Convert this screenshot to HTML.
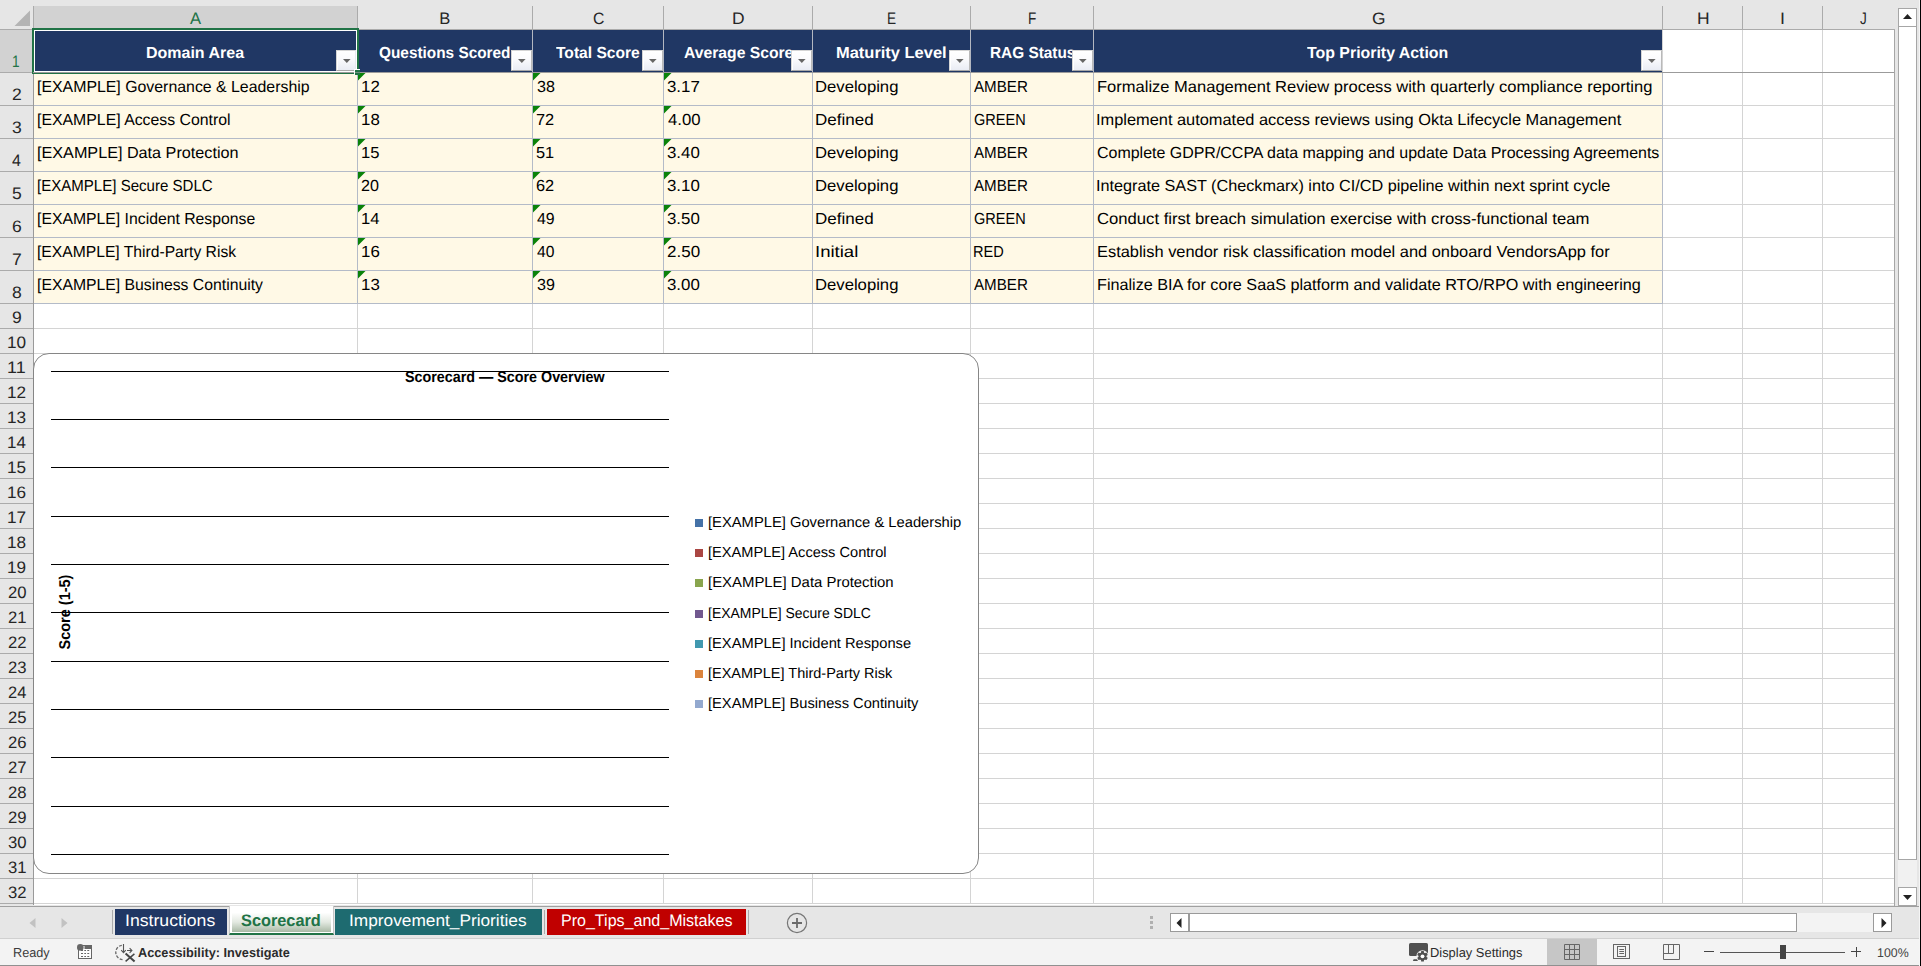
<!DOCTYPE html><html lang="en"><head><meta charset="utf-8"><title>Scorecard</title>
<style>
html,body{margin:0;padding:0}
body{width:1921px;height:966px;position:relative;overflow:hidden;background:#e6e6e6;font-family:"Liberation Sans", sans-serif;text-rendering:geometricPrecision}
div,span,svg{position:absolute;box-sizing:border-box}
.t{white-space:nowrap;line-height:40px;height:40px;transform-origin:0 0}
.hl{height:1px;left:0}
.vl{width:1px;top:0}

</style></head><body>
<div id="sheet" style="left:0;top:0;width:1921px;height:906px">
<div style="left:34px;top:30px;width:1860px;height:875px;background:#fff;"></div>
<div style="left:34px;top:72px;width:1860px;height:1px;background:#d4d4d4;"></div>
<div style="left:34px;top:105px;width:1860px;height:1px;background:#d4d4d4;"></div>
<div style="left:34px;top:138px;width:1860px;height:1px;background:#d4d4d4;"></div>
<div style="left:34px;top:171px;width:1860px;height:1px;background:#d4d4d4;"></div>
<div style="left:34px;top:204px;width:1860px;height:1px;background:#d4d4d4;"></div>
<div style="left:34px;top:237px;width:1860px;height:1px;background:#d4d4d4;"></div>
<div style="left:34px;top:270px;width:1860px;height:1px;background:#d4d4d4;"></div>
<div style="left:34px;top:303px;width:1860px;height:1px;background:#d4d4d4;"></div>
<div style="left:34px;top:328px;width:1860px;height:1px;background:#d4d4d4;"></div>
<div style="left:34px;top:353px;width:1860px;height:1px;background:#d4d4d4;"></div>
<div style="left:34px;top:378px;width:1860px;height:1px;background:#d4d4d4;"></div>
<div style="left:34px;top:403px;width:1860px;height:1px;background:#d4d4d4;"></div>
<div style="left:34px;top:428px;width:1860px;height:1px;background:#d4d4d4;"></div>
<div style="left:34px;top:453px;width:1860px;height:1px;background:#d4d4d4;"></div>
<div style="left:34px;top:478px;width:1860px;height:1px;background:#d4d4d4;"></div>
<div style="left:34px;top:503px;width:1860px;height:1px;background:#d4d4d4;"></div>
<div style="left:34px;top:528px;width:1860px;height:1px;background:#d4d4d4;"></div>
<div style="left:34px;top:553px;width:1860px;height:1px;background:#d4d4d4;"></div>
<div style="left:34px;top:578px;width:1860px;height:1px;background:#d4d4d4;"></div>
<div style="left:34px;top:603px;width:1860px;height:1px;background:#d4d4d4;"></div>
<div style="left:34px;top:628px;width:1860px;height:1px;background:#d4d4d4;"></div>
<div style="left:34px;top:653px;width:1860px;height:1px;background:#d4d4d4;"></div>
<div style="left:34px;top:678px;width:1860px;height:1px;background:#d4d4d4;"></div>
<div style="left:34px;top:703px;width:1860px;height:1px;background:#d4d4d4;"></div>
<div style="left:34px;top:728px;width:1860px;height:1px;background:#d4d4d4;"></div>
<div style="left:34px;top:753px;width:1860px;height:1px;background:#d4d4d4;"></div>
<div style="left:34px;top:778px;width:1860px;height:1px;background:#d4d4d4;"></div>
<div style="left:34px;top:803px;width:1860px;height:1px;background:#d4d4d4;"></div>
<div style="left:34px;top:828px;width:1860px;height:1px;background:#d4d4d4;"></div>
<div style="left:34px;top:853px;width:1860px;height:1px;background:#d4d4d4;"></div>
<div style="left:34px;top:878px;width:1860px;height:1px;background:#d4d4d4;"></div>
<div style="left:34px;top:903px;width:1860px;height:1px;background:#d4d4d4;"></div>
<div style="left:357px;top:30px;width:1px;height:874px;background:#d4d4d4;"></div>
<div style="left:532px;top:30px;width:1px;height:874px;background:#d4d4d4;"></div>
<div style="left:663px;top:30px;width:1px;height:874px;background:#d4d4d4;"></div>
<div style="left:812px;top:30px;width:1px;height:874px;background:#d4d4d4;"></div>
<div style="left:970px;top:30px;width:1px;height:874px;background:#d4d4d4;"></div>
<div style="left:1093px;top:30px;width:1px;height:874px;background:#d4d4d4;"></div>
<div style="left:1662px;top:30px;width:1px;height:874px;background:#d4d4d4;"></div>
<div style="left:1742px;top:30px;width:1px;height:874px;background:#d4d4d4;"></div>
<div style="left:1822px;top:30px;width:1px;height:874px;background:#d4d4d4;"></div>
<div style="left:0px;top:72px;width:1895px;height:1px;background:#9b9b9b;"></div>
<div style="left:1894px;top:29px;width:1px;height:877px;background:#a6a6a6;"></div>
<div id="colhead" style="left:0;top:6px;width:1895px;height:24px">
<div style="left:34px;top:0px;width:323px;height:23px;background:#d2d2d2;"></div>
<div style="left:33px;top:0px;width:1px;height:23px;background:#ababab;"></div>
<div style="left:357px;top:0px;width:1px;height:23px;background:#ababab;"></div>
<div style="left:532px;top:0px;width:1px;height:23px;background:#ababab;"></div>
<div style="left:663px;top:0px;width:1px;height:23px;background:#ababab;"></div>
<div style="left:812px;top:0px;width:1px;height:23px;background:#ababab;"></div>
<div style="left:970px;top:0px;width:1px;height:23px;background:#ababab;"></div>
<div style="left:1093px;top:0px;width:1px;height:23px;background:#ababab;"></div>
<div style="left:1662px;top:0px;width:1px;height:23px;background:#ababab;"></div>
<div style="left:1742px;top:0px;width:1px;height:23px;background:#ababab;"></div>
<div style="left:1822px;top:0px;width:1px;height:23px;background:#ababab;"></div>
</div>
<div style="left:0px;top:29px;width:1895px;height:1px;background:#ababab;"></div>
<svg style="left:14px;top:10px" width="17" height="17" viewBox="0 0 17 17"><path d="M16 0.5V16H0.5Z" fill="#b4b4b4"/></svg>
<span id="t1" class="t" style="left:190.00px;top:-1px;font-size:16.6px;color:#217346;">A</span>
<span id="t2" class="t" style="left:439.25px;top:-1px;font-size:16.6px;color:#262626;">B</span>
<span id="t3" class="t" style="left:592.79px;top:-1px;font-size:16.6px;color:#262626;transform:scaleX(0.9524);">C</span>
<span id="t4" class="t" style="left:731.69px;top:-1px;font-size:16.6px;color:#262626;transform:scaleX(1.0500);">D</span>
<span id="t5" class="t" style="left:886.93px;top:-1px;font-size:16.6px;color:#262626;transform:scaleX(0.8200);">E</span>
<span id="t6" class="t" style="left:1027.84px;top:-1px;font-size:16.6px;color:#262626;transform:scaleX(0.8200);">F</span>
<span id="t7" class="t" style="left:1371.72px;top:-1px;font-size:16.6px;color:#262626;transform:scaleX(1.0455);">G</span>
<span id="t8" class="t" style="left:1696.68px;top:-1px;font-size:16.6px;color:#262626;transform:scaleX(1.0526);">H</span>
<span id="t9" class="t" style="left:1780.07px;top:-1px;font-size:16.6px;color:#262626;transform:scaleX(1.0800);">I</span>
<span id="t10" class="t" style="left:1859.78px;top:-1px;font-size:16.6px;color:#262626;transform:scaleX(0.8200);">J</span>
<div id="rowhead" style="left:0;top:30px;width:34px;height:875px">
<div style="left:0px;top:0px;width:33px;height:42px;background:#d2d2d2;"></div>
<div style="left:0px;top:42px;width:33px;height:1px;background:#ababab;"></div>
<div style="left:0px;top:75px;width:33px;height:1px;background:#ababab;"></div>
<div style="left:0px;top:108px;width:33px;height:1px;background:#ababab;"></div>
<div style="left:0px;top:141px;width:33px;height:1px;background:#ababab;"></div>
<div style="left:0px;top:174px;width:33px;height:1px;background:#ababab;"></div>
<div style="left:0px;top:207px;width:33px;height:1px;background:#ababab;"></div>
<div style="left:0px;top:240px;width:33px;height:1px;background:#ababab;"></div>
<div style="left:0px;top:273px;width:33px;height:1px;background:#ababab;"></div>
<div style="left:0px;top:298px;width:33px;height:1px;background:#ababab;"></div>
<div style="left:0px;top:323px;width:33px;height:1px;background:#ababab;"></div>
<div style="left:0px;top:348px;width:33px;height:1px;background:#ababab;"></div>
<div style="left:0px;top:373px;width:33px;height:1px;background:#ababab;"></div>
<div style="left:0px;top:398px;width:33px;height:1px;background:#ababab;"></div>
<div style="left:0px;top:423px;width:33px;height:1px;background:#ababab;"></div>
<div style="left:0px;top:448px;width:33px;height:1px;background:#ababab;"></div>
<div style="left:0px;top:473px;width:33px;height:1px;background:#ababab;"></div>
<div style="left:0px;top:498px;width:33px;height:1px;background:#ababab;"></div>
<div style="left:0px;top:523px;width:33px;height:1px;background:#ababab;"></div>
<div style="left:0px;top:548px;width:33px;height:1px;background:#ababab;"></div>
<div style="left:0px;top:573px;width:33px;height:1px;background:#ababab;"></div>
<div style="left:0px;top:598px;width:33px;height:1px;background:#ababab;"></div>
<div style="left:0px;top:623px;width:33px;height:1px;background:#ababab;"></div>
<div style="left:0px;top:648px;width:33px;height:1px;background:#ababab;"></div>
<div style="left:0px;top:673px;width:33px;height:1px;background:#ababab;"></div>
<div style="left:0px;top:698px;width:33px;height:1px;background:#ababab;"></div>
<div style="left:0px;top:723px;width:33px;height:1px;background:#ababab;"></div>
<div style="left:0px;top:748px;width:33px;height:1px;background:#ababab;"></div>
<div style="left:0px;top:773px;width:33px;height:1px;background:#ababab;"></div>
<div style="left:0px;top:798px;width:33px;height:1px;background:#ababab;"></div>
<div style="left:0px;top:823px;width:33px;height:1px;background:#ababab;"></div>
<div style="left:0px;top:848px;width:33px;height:1px;background:#ababab;"></div>
<div style="left:0px;top:873px;width:33px;height:1px;background:#ababab;"></div>
<div style="left:33px;top:0px;width:1px;height:875px;background:#9a9a9a;"></div>
</div>
<span id="t11" class="t" style="left:12.10px;top:42px;font-size:16.6px;color:#217346;transform:scaleX(0.8200);">1</span>
<span id="t12" class="t" style="left:11.51px;top:75px;font-size:16.6px;color:#262626;transform:scaleX(1.0581);">2</span>
<span id="t13" class="t" style="left:11.51px;top:108px;font-size:16.6px;color:#262626;transform:scaleX(1.0581);">3</span>
<span id="t14" class="t" style="left:12.06px;top:141px;font-size:16.6px;color:#262626;transform:scaleX(0.9647);">4</span>
<span id="t15" class="t" style="left:11.51px;top:174px;font-size:16.6px;color:#262626;transform:scaleX(1.0581);">5</span>
<span id="t16" class="t" style="left:11.51px;top:207px;font-size:16.6px;color:#262626;transform:scaleX(1.0581);">6</span>
<span id="t17" class="t" style="left:11.51px;top:240px;font-size:16.6px;color:#262626;transform:scaleX(1.0581);">7</span>
<span id="t18" class="t" style="left:11.51px;top:273px;font-size:16.6px;color:#262626;transform:scaleX(1.0581);">8</span>
<span id="t19" class="t" style="left:11.51px;top:298px;font-size:16.6px;color:#262626;transform:scaleX(1.0581);">9</span>
<span id="t20" class="t" style="left:7.20px;top:323px;font-size:16.6px;color:#262626;transform:scaleX(1.0364);">10</span>
<span id="t21" class="t" style="left:7.46px;top:348px;font-size:16.6px;color:#262626;transform:scaleX(1.0800);">11</span>
<span id="t22" class="t" style="left:7.20px;top:373px;font-size:16.6px;color:#262626;transform:scaleX(1.0364);">12</span>
<span id="t23" class="t" style="left:7.20px;top:398px;font-size:16.6px;color:#262626;transform:scaleX(1.0364);">13</span>
<span id="t24" class="t" style="left:7.22px;top:423px;font-size:16.6px;color:#262626;transform:scaleX(1.0209);">14</span>
<span id="t25" class="t" style="left:7.20px;top:448px;font-size:16.6px;color:#262626;transform:scaleX(1.0364);">15</span>
<span id="t26" class="t" style="left:7.20px;top:473px;font-size:16.6px;color:#262626;transform:scaleX(1.0364);">16</span>
<span id="t27" class="t" style="left:7.20px;top:498px;font-size:16.6px;color:#262626;transform:scaleX(1.0364);">17</span>
<span id="t28" class="t" style="left:7.20px;top:523px;font-size:16.6px;color:#262626;transform:scaleX(1.0364);">18</span>
<span id="t29" class="t" style="left:7.20px;top:548px;font-size:16.6px;color:#262626;transform:scaleX(1.0364);">19</span>
<span id="t30" class="t" style="left:7.75px;top:573px;font-size:16.6px;color:#262626;transform:scaleX(1.0059);">20</span>
<span id="t31" class="t" style="left:7.75px;top:598px;font-size:16.6px;color:#262626;transform:scaleX(1.0059);">21</span>
<span id="t32" class="t" style="left:7.75px;top:623px;font-size:16.6px;color:#262626;transform:scaleX(1.0059);">22</span>
<span id="t33" class="t" style="left:7.75px;top:648px;font-size:16.6px;color:#262626;transform:scaleX(1.0059);">23</span>
<span id="t34" class="t" style="left:7.76px;top:673px;font-size:16.6px;color:#262626;transform:scaleX(0.9913);">24</span>
<span id="t35" class="t" style="left:7.75px;top:698px;font-size:16.6px;color:#262626;transform:scaleX(1.0059);">25</span>
<span id="t36" class="t" style="left:7.75px;top:723px;font-size:16.6px;color:#262626;transform:scaleX(1.0059);">26</span>
<span id="t37" class="t" style="left:7.75px;top:748px;font-size:16.6px;color:#262626;transform:scaleX(1.0059);">27</span>
<span id="t38" class="t" style="left:7.75px;top:773px;font-size:16.6px;color:#262626;transform:scaleX(1.0059);">28</span>
<span id="t39" class="t" style="left:7.75px;top:798px;font-size:16.6px;color:#262626;transform:scaleX(1.0059);">29</span>
<span id="t40" class="t" style="left:7.75px;top:823px;font-size:16.6px;color:#262626;transform:scaleX(1.0059);">30</span>
<span id="t41" class="t" style="left:7.75px;top:848px;font-size:16.6px;color:#262626;transform:scaleX(1.0059);">31</span>
<span id="t42" class="t" style="left:7.75px;top:873px;font-size:16.6px;color:#262626;transform:scaleX(1.0059);">32</span>
<div style="left:35px;top:31px;width:321px;height:40px;background:#203764;"></div>
<div style="left:359px;top:30px;width:174px;height:42px;background:#203764;"></div>
<div style="left:533px;top:30px;width:130px;height:42px;background:#203764;"></div>
<div style="left:664px;top:30px;width:148px;height:42px;background:#203764;"></div>
<div style="left:813px;top:30px;width:157px;height:42px;background:#203764;"></div>
<div style="left:971px;top:30px;width:122px;height:42px;background:#203764;"></div>
<div style="left:1094px;top:30px;width:568px;height:42px;background:#203764;"></div>
<div style="left:532px;top:30px;width:1px;height:42px;background:#b3b7c1;"></div>
<div style="left:663px;top:30px;width:1px;height:42px;background:#b3b7c1;"></div>
<div style="left:812px;top:30px;width:1px;height:42px;background:#b3b7c1;"></div>
<div style="left:970px;top:30px;width:1px;height:42px;background:#b3b7c1;"></div>
<div style="left:1093px;top:30px;width:1px;height:42px;background:#b3b7c1;"></div>
<span id="t43" class="t" style="left:145.50px;top:34px;font-size:16px;color:#fff;font-weight:700;transform:scaleX(0.9995);">Domain Area</span>
<span id="t44" class="t" style="left:379.02px;top:34px;font-size:16px;color:#fff;font-weight:700;transform:scaleX(0.9601);">Questions Scored</span>
<span id="t45" class="t" style="left:556.16px;top:34px;font-size:16px;color:#fff;font-weight:700;transform:scaleX(0.9748);">Total Score</span>
<span id="t46" class="t" style="left:683.91px;top:34px;font-size:16px;color:#fff;font-weight:700;transform:scaleX(0.9810);">Average Score</span>
<span id="t47" class="t" style="left:836.47px;top:34px;font-size:16px;color:#fff;font-weight:700;transform:scaleX(1.0284);">Maturity Level</span>
<span id="t48" class="t" style="left:989.74px;top:34px;font-size:16px;color:#fff;font-weight:700;transform:scaleX(0.9605);">RAG Status</span>
<span id="t49" class="t" style="left:1307.25px;top:34px;font-size:16px;color:#fff;font-weight:700;transform:scaleX(0.9929);">Top Priority Action</span>
<div class="fb" style="left:336px;top:50px;width:20px;height:21px;background:linear-gradient(#fff,#fbfbfd 40%,#e9ecf4);border:1px solid #e6e8ef;border-top-color:#d5d5d5;border-left-color:#d5d5d5;border-bottom-color:#a9a9a9;box-shadow:inset 1px 1px 0 #fff"></div>
<svg style="left:343px;top:59px" width="8" height="4" viewBox="0 0 8 4"><path d="M0 0H7.6L3.8 4Z" fill="#666"/></svg>
<div class="fb" style="left:511px;top:50px;width:21px;height:21px;background:linear-gradient(#fff,#fbfbfd 40%,#e9ecf4);border:1px solid #b9b9b9;border-top-color:#d5d5d5;border-left-color:#d5d5d5;border-bottom-color:#a9a9a9;box-shadow:inset 1px 1px 0 #fff"></div>
<svg style="left:518px;top:59px" width="8" height="4" viewBox="0 0 8 4"><path d="M0 0H7.6L3.8 4Z" fill="#666"/></svg>
<div class="fb" style="left:642px;top:50px;width:21px;height:21px;background:linear-gradient(#fff,#fbfbfd 40%,#e9ecf4);border:1px solid #b9b9b9;border-top-color:#d5d5d5;border-left-color:#d5d5d5;border-bottom-color:#a9a9a9;box-shadow:inset 1px 1px 0 #fff"></div>
<svg style="left:649px;top:59px" width="8" height="4" viewBox="0 0 8 4"><path d="M0 0H7.6L3.8 4Z" fill="#666"/></svg>
<div class="fb" style="left:791px;top:50px;width:21px;height:21px;background:linear-gradient(#fff,#fbfbfd 40%,#e9ecf4);border:1px solid #b9b9b9;border-top-color:#d5d5d5;border-left-color:#d5d5d5;border-bottom-color:#a9a9a9;box-shadow:inset 1px 1px 0 #fff"></div>
<svg style="left:798px;top:59px" width="8" height="4" viewBox="0 0 8 4"><path d="M0 0H7.6L3.8 4Z" fill="#666"/></svg>
<div class="fb" style="left:949px;top:50px;width:21px;height:21px;background:linear-gradient(#fff,#fbfbfd 40%,#e9ecf4);border:1px solid #b9b9b9;border-top-color:#d5d5d5;border-left-color:#d5d5d5;border-bottom-color:#a9a9a9;box-shadow:inset 1px 1px 0 #fff"></div>
<svg style="left:956px;top:59px" width="8" height="4" viewBox="0 0 8 4"><path d="M0 0H7.6L3.8 4Z" fill="#666"/></svg>
<div class="fb" style="left:1072px;top:50px;width:21px;height:21px;background:linear-gradient(#fff,#fbfbfd 40%,#e9ecf4);border:1px solid #b9b9b9;border-top-color:#d5d5d5;border-left-color:#d5d5d5;border-bottom-color:#a9a9a9;box-shadow:inset 1px 1px 0 #fff"></div>
<svg style="left:1079px;top:59px" width="8" height="4" viewBox="0 0 8 4"><path d="M0 0H7.6L3.8 4Z" fill="#666"/></svg>
<div class="fb" style="left:1641px;top:50px;width:21px;height:21px;background:linear-gradient(#fff,#fbfbfd 40%,#e9ecf4);border:1px solid #b9b9b9;border-top-color:#d5d5d5;border-left-color:#d5d5d5;border-bottom-color:#a9a9a9;box-shadow:inset 1px 1px 0 #fff"></div>
<svg style="left:1648px;top:59px" width="8" height="4" viewBox="0 0 8 4"><path d="M0 0H7.6L3.8 4Z" fill="#666"/></svg>
<div style="left:34px;top:73px;width:1628px;height:230px;background:#fff9e6;"></div>
<div style="left:34px;top:105px;width:1629px;height:1px;background:#b4bbc8;"></div>
<div style="left:34px;top:138px;width:1629px;height:1px;background:#b4bbc8;"></div>
<div style="left:34px;top:171px;width:1629px;height:1px;background:#b4bbc8;"></div>
<div style="left:34px;top:204px;width:1629px;height:1px;background:#b4bbc8;"></div>
<div style="left:34px;top:237px;width:1629px;height:1px;background:#b4bbc8;"></div>
<div style="left:34px;top:270px;width:1629px;height:1px;background:#b4bbc8;"></div>
<div style="left:34px;top:303px;width:1629px;height:1px;background:#b4bbc8;"></div>
<div style="left:357px;top:73px;width:1px;height:231px;background:#b4bbc8;"></div>
<div style="left:532px;top:73px;width:1px;height:231px;background:#b4bbc8;"></div>
<div style="left:663px;top:73px;width:1px;height:231px;background:#b4bbc8;"></div>
<div style="left:812px;top:73px;width:1px;height:231px;background:#b4bbc8;"></div>
<div style="left:970px;top:73px;width:1px;height:231px;background:#b4bbc8;"></div>
<div style="left:1093px;top:73px;width:1px;height:231px;background:#b4bbc8;"></div>
<div style="left:1662px;top:73px;width:1px;height:231px;background:#b4bbc8;"></div>
<span id="t50" class="t" style="left:37.01px;top:68px;font-size:16px;color:#000;transform:scaleX(0.9918);">[EXAMPLE] Governance &amp; Leadership</span>
<span id="t51" class="t" style="left:360.68px;top:68px;font-size:16px;color:#000;transform:scaleX(1.0540);">12</span>
<svg style="left:358px;top:73px" width="8" height="8" viewBox="0 0 8 8"><path d="M0 0H7.5L0 7.5Z" fill="#0a820a"/></svg>
<span id="t52" class="t" style="left:536.50px;top:68px;font-size:16px;color:#000;transform:scaleX(1.0061);">38</span>
<svg style="left:533px;top:73px" width="8" height="8" viewBox="0 0 8 8"><path d="M0 0H7.5L0 7.5Z" fill="#0a820a"/></svg>
<span id="t53" class="t" style="left:667.47px;top:68px;font-size:16px;color:#000;transform:scaleX(1.0533);">3.17</span>
<svg style="left:664px;top:73px" width="8" height="8" viewBox="0 0 8 8"><path d="M0 0H7.5L0 7.5Z" fill="#0a820a"/></svg>
<span id="t54" class="t" style="left:815.10px;top:68px;font-size:16px;color:#000;transform:scaleX(1.0418);">Developing</span>
<span id="t55" class="t" style="left:974.40px;top:68px;font-size:16px;color:#000;transform:scaleX(0.9458);">AMBER</span>
<span id="t56" class="t" style="left:1096.71px;top:68px;font-size:16px;color:#000;transform:scaleX(1.0322);">Formalize Management Review process with quarterly compliance reporting</span>
<span id="t57" class="t" style="left:37.01px;top:101px;font-size:16px;color:#000;transform:scaleX(0.9897);">[EXAMPLE] Access Control</span>
<span id="t58" class="t" style="left:360.68px;top:101px;font-size:16px;color:#000;transform:scaleX(1.0540);">18</span>
<svg style="left:358px;top:106px" width="8" height="8" viewBox="0 0 8 8"><path d="M0 0H7.5L0 7.5Z" fill="#0a820a"/></svg>
<span id="t59" class="t" style="left:536.23px;top:101px;font-size:16px;color:#000;transform:scaleX(1.0215);">72</span>
<svg style="left:533px;top:106px" width="8" height="8" viewBox="0 0 8 8"><path d="M0 0H7.5L0 7.5Z" fill="#0a820a"/></svg>
<span id="t60" class="t" style="left:667.74px;top:101px;font-size:16px;color:#000;transform:scaleX(1.0446);">4.00</span>
<svg style="left:664px;top:106px" width="8" height="8" viewBox="0 0 8 8"><path d="M0 0H7.5L0 7.5Z" fill="#0a820a"/></svg>
<span id="t61" class="t" style="left:815.07px;top:101px;font-size:16px;color:#000;transform:scaleX(1.0623);">Defined</span>
<span id="t62" class="t" style="left:973.72px;top:101px;font-size:16px;color:#000;transform:scaleX(0.9073);">GREEN</span>
<span id="t63" class="t" style="left:1096.46px;top:101px;font-size:16px;color:#000;transform:scaleX(1.0235);">Implement automated access reviews using Okta Lifecycle Management</span>
<span id="t64" class="t" style="left:36.99px;top:134px;font-size:16px;color:#000;transform:scaleX(1.0114);">[EXAMPLE] Data Protection</span>
<span id="t65" class="t" style="left:360.70px;top:134px;font-size:16px;color:#000;transform:scaleX(1.0375);">15</span>
<svg style="left:358px;top:139px" width="8" height="8" viewBox="0 0 8 8"><path d="M0 0H7.5L0 7.5Z" fill="#0a820a"/></svg>
<span id="t66" class="t" style="left:536.23px;top:134px;font-size:16px;color:#000;transform:scaleX(1.0215);">51</span>
<svg style="left:533px;top:139px" width="8" height="8" viewBox="0 0 8 8"><path d="M0 0H7.5L0 7.5Z" fill="#0a820a"/></svg>
<span id="t67" class="t" style="left:667.47px;top:134px;font-size:16px;color:#000;transform:scaleX(1.0533);">3.40</span>
<svg style="left:664px;top:139px" width="8" height="8" viewBox="0 0 8 8"><path d="M0 0H7.5L0 7.5Z" fill="#0a820a"/></svg>
<span id="t68" class="t" style="left:815.10px;top:134px;font-size:16px;color:#000;transform:scaleX(1.0418);">Developing</span>
<span id="t69" class="t" style="left:974.40px;top:134px;font-size:16px;color:#000;transform:scaleX(0.9458);">AMBER</span>
<span id="t70" class="t" style="left:1097.25px;top:134px;font-size:16px;color:#000;transform:scaleX(0.9978);">Complete GDPR/CCPA data mapping and update Data Processing Agreements</span>
<span id="t71" class="t" style="left:37.06px;top:167px;font-size:16px;color:#000;transform:scaleX(0.9405);">[EXAMPLE] Secure SDLC</span>
<span id="t72" class="t" style="left:361.25px;top:167px;font-size:16px;color:#000;transform:scaleX(1.0061);">20</span>
<svg style="left:358px;top:172px" width="8" height="8" viewBox="0 0 8 8"><path d="M0 0H7.5L0 7.5Z" fill="#0a820a"/></svg>
<span id="t73" class="t" style="left:536.23px;top:167px;font-size:16px;color:#000;transform:scaleX(1.0215);">62</span>
<svg style="left:533px;top:172px" width="8" height="8" viewBox="0 0 8 8"><path d="M0 0H7.5L0 7.5Z" fill="#0a820a"/></svg>
<span id="t74" class="t" style="left:667.47px;top:167px;font-size:16px;color:#000;transform:scaleX(1.0533);">3.10</span>
<svg style="left:664px;top:172px" width="8" height="8" viewBox="0 0 8 8"><path d="M0 0H7.5L0 7.5Z" fill="#0a820a"/></svg>
<span id="t75" class="t" style="left:815.10px;top:167px;font-size:16px;color:#000;transform:scaleX(1.0418);">Developing</span>
<span id="t76" class="t" style="left:974.40px;top:167px;font-size:16px;color:#000;transform:scaleX(0.9458);">AMBER</span>
<span id="t77" class="t" style="left:1096.48px;top:167px;font-size:16px;color:#000;transform:scaleX(1.0134);">Integrate SAST (Checkmarx) into CI/CD pipeline within next sprint cycle</span>
<span id="t78" class="t" style="left:37.01px;top:200px;font-size:16px;color:#000;transform:scaleX(0.9852);">[EXAMPLE] Incident Response</span>
<span id="t79" class="t" style="left:360.70px;top:200px;font-size:16px;color:#000;transform:scaleX(1.0375);">14</span>
<svg style="left:358px;top:205px" width="8" height="8" viewBox="0 0 8 8"><path d="M0 0H7.5L0 7.5Z" fill="#0a820a"/></svg>
<span id="t80" class="t" style="left:536.75px;top:200px;font-size:16px;color:#000;transform:scaleX(0.9910);">49</span>
<svg style="left:533px;top:205px" width="8" height="8" viewBox="0 0 8 8"><path d="M0 0H7.5L0 7.5Z" fill="#0a820a"/></svg>
<span id="t81" class="t" style="left:667.47px;top:200px;font-size:16px;color:#000;transform:scaleX(1.0533);">3.50</span>
<svg style="left:664px;top:205px" width="8" height="8" viewBox="0 0 8 8"><path d="M0 0H7.5L0 7.5Z" fill="#0a820a"/></svg>
<span id="t82" class="t" style="left:815.07px;top:200px;font-size:16px;color:#000;transform:scaleX(1.0623);">Defined</span>
<span id="t83" class="t" style="left:973.72px;top:200px;font-size:16px;color:#000;transform:scaleX(0.9073);">GREEN</span>
<span id="t84" class="t" style="left:1097.22px;top:200px;font-size:16px;color:#000;transform:scaleX(1.0408);">Conduct first breach simulation exercise with cross-functional team</span>
<span id="t85" class="t" style="left:37.02px;top:233px;font-size:16px;color:#000;transform:scaleX(0.9790);">[EXAMPLE] Third-Party Risk</span>
<span id="t86" class="t" style="left:360.68px;top:233px;font-size:16px;color:#000;transform:scaleX(1.0540);">16</span>
<svg style="left:358px;top:238px" width="8" height="8" viewBox="0 0 8 8"><path d="M0 0H7.5L0 7.5Z" fill="#0a820a"/></svg>
<span id="t87" class="t" style="left:536.76px;top:233px;font-size:16px;color:#000;transform:scaleX(0.9765);">40</span>
<svg style="left:533px;top:238px" width="8" height="8" viewBox="0 0 8 8"><path d="M0 0H7.5L0 7.5Z" fill="#0a820a"/></svg>
<span id="t88" class="t" style="left:667.20px;top:233px;font-size:16px;color:#000;transform:scaleX(1.0622);">2.50</span>
<svg style="left:664px;top:238px" width="8" height="8" viewBox="0 0 8 8"><path d="M0 0H7.5L0 7.5Z" fill="#0a820a"/></svg>
<span id="t89" class="t" style="left:814.66px;top:233px;font-size:16px;color:#000;transform:scaleX(1.1597);">Initial</span>
<span id="t90" class="t" style="left:973.26px;top:233px;font-size:16px;color:#000;transform:scaleX(0.9102);">RED</span>
<span id="t91" class="t" style="left:1096.72px;top:233px;font-size:16px;color:#000;transform:scaleX(1.0256);">Establish vendor risk classification model and onboard VendorsApp for</span>
<span id="t92" class="t" style="left:37.02px;top:266px;font-size:16px;color:#000;transform:scaleX(0.9847);">[EXAMPLE] Business Continuity</span>
<span id="t93" class="t" style="left:360.68px;top:266px;font-size:16px;color:#000;transform:scaleX(1.0540);">13</span>
<svg style="left:358px;top:271px" width="8" height="8" viewBox="0 0 8 8"><path d="M0 0H7.5L0 7.5Z" fill="#0a820a"/></svg>
<span id="t94" class="t" style="left:536.50px;top:266px;font-size:16px;color:#000;transform:scaleX(1.0061);">39</span>
<svg style="left:533px;top:271px" width="8" height="8" viewBox="0 0 8 8"><path d="M0 0H7.5L0 7.5Z" fill="#0a820a"/></svg>
<span id="t95" class="t" style="left:667.47px;top:266px;font-size:16px;color:#000;transform:scaleX(1.0533);">3.00</span>
<svg style="left:664px;top:271px" width="8" height="8" viewBox="0 0 8 8"><path d="M0 0H7.5L0 7.5Z" fill="#0a820a"/></svg>
<span id="t96" class="t" style="left:815.10px;top:266px;font-size:16px;color:#000;transform:scaleX(1.0418);">Developing</span>
<span id="t97" class="t" style="left:974.40px;top:266px;font-size:16px;color:#000;transform:scaleX(0.9458);">AMBER</span>
<span id="t98" class="t" style="left:1096.74px;top:266px;font-size:16px;color:#000;transform:scaleX(1.0117);">Finalize BIA for core SaaS platform and validate RTO/RPO with engineering</span>
<div id="sel" style="left:32px;top:28px;width:327px;height:46px;border:2px solid #217346"></div>
<div style="left:34px;top:30px;width:323px;height:1px;background:#fff;"></div>
<div style="left:34px;top:30px;width:1px;height:42px;background:#fff;"></div>
<div style="left:356px;top:30px;width:1px;height:42px;background:#fff;"></div>
<div style="left:34px;top:71px;width:323px;height:1px;background:#fff;"></div>
<div style="left:33px;top:72px;width:324px;height:1px;background:#9b9b9b;"></div>
<div style="left:354px;top:69px;width:6px;height:6px;background:#fff;"></div>
<div style="left:355px;top:70px;width:5px;height:5px;background:#217346;"></div>
<div style="left:355px;top:72px;width:5px;height:1px;background:#6f8f7c;"></div>
<div id="chart" style="left:33px;top:353px;width:946px;height:521px;background:#fff;border:1px solid #868686;border-radius:16px">
</div>
<span id="t99" class="t" style="left:405.34px;top:358px;font-size:15.4px;color:#000;font-weight:700;transform:scaleX(0.9298);">Scorecard — Score Overview</span>
<div style="left:51px;top:371px;width:618px;height:1px;background:#000;"></div>
<div style="left:51px;top:419px;width:618px;height:1px;background:#000;"></div>
<div style="left:51px;top:467px;width:618px;height:1px;background:#000;"></div>
<div style="left:51px;top:516px;width:618px;height:1px;background:#000;"></div>
<div style="left:51px;top:564px;width:618px;height:1px;background:#000;"></div>
<div style="left:51px;top:612px;width:618px;height:1px;background:#000;"></div>
<div style="left:51px;top:661px;width:618px;height:1px;background:#000;"></div>
<div style="left:51px;top:709px;width:618px;height:1px;background:#000;"></div>
<div style="left:51px;top:757px;width:618px;height:1px;background:#000;"></div>
<div style="left:51px;top:806px;width:618px;height:1px;background:#000;"></div>
<div style="left:51px;top:854px;width:618px;height:1px;background:#000;"></div>
<div id="axt" style="left:0;top:0;width:0;height:0;transform:translate(70px,649.5px) rotate(-90deg);transform-origin:0 0">
<span id="t100" class="t" style="left:-0.46px;top:-24px;font-size:15.6px;color:#000;font-weight:700;transform:scaleX(0.9300);">Score (1-5)</span>
</div>
<div style="left:695px;top:519px;width:8px;height:8px;background:#4572a7;"></div>
<span id="t101" class="t" style="left:707.69px;top:503px;font-size:14.6px;color:#000;transform:scaleX(1.0104);">[EXAMPLE] Governance &amp; Leadership</span>
<div style="left:695px;top:549px;width:8px;height:8px;background:#aa4643;"></div>
<span id="t102" class="t" style="left:707.70px;top:533px;font-size:14.6px;color:#000;transform:scaleX(1.0006);">[EXAMPLE] Access Control</span>
<div style="left:695px;top:579px;width:8px;height:8px;background:#89a54e;"></div>
<span id="t103" class="t" style="left:707.68px;top:563px;font-size:14.6px;color:#000;transform:scaleX(1.0214);">[EXAMPLE] Data Protection</span>
<div style="left:695px;top:610px;width:8px;height:8px;background:#71588f;"></div>
<span id="t104" class="t" style="left:707.74px;top:594px;font-size:14.6px;color:#000;transform:scaleX(0.9559);">[EXAMPLE] Secure SDLC</span>
<div style="left:695px;top:640px;width:8px;height:8px;background:#4198af;"></div>
<span id="t105" class="t" style="left:707.69px;top:624px;font-size:14.6px;color:#000;transform:scaleX(1.0052);">[EXAMPLE] Incident Response</span>
<div style="left:695px;top:670px;width:8px;height:8px;background:#db843d;"></div>
<span id="t106" class="t" style="left:707.71px;top:654px;font-size:14.6px;color:#000;transform:scaleX(0.9935);">[EXAMPLE] Third-Party Risk</span>
<div style="left:695px;top:700px;width:8px;height:8px;background:#93a9cf;"></div>
<span id="t107" class="t" style="left:707.69px;top:684px;font-size:14.6px;color:#000;transform:scaleX(1.0050);">[EXAMPLE] Business Continuity</span>
</div>
<div id="vscroll" style="left:1895px;top:0;width:26px;height:906px;background:#e6e6e6">
<div style="left:3px;top:27px;width:19px;height:861px;background:#f1f1f1;"></div>
<div style="left:3px;top:26px;width:19px;height:834px;background:#fff;border:1px solid #a6a6a6"></div>
<div style="left:3px;top:8px;width:19px;height:19px;background:#fff;border:1px solid #a6a6a6"></div>
<svg style="left:8px;top:14px" width="9" height="5" viewBox="0 0 9 5"><path d="M0 5L4.5 0L9 5Z" fill="#222"/></svg>
<div style="left:3px;top:887px;width:19px;height:19px;background:#fff;border:1px solid #a6a6a6"></div>
<svg style="left:8px;top:895px" width="9" height="5" viewBox="0 0 9 5"><path d="M0 0L4.5 5L9 0Z" fill="#222"/></svg>
</div>
<div id="tabbar" style="left:0;top:906px;width:1921px;height:33px;background:#e6e6e6">
<div style="left:0px;top:0px;width:1921px;height:1px;background:#a0a0a0;"></div>
<div style="left:0px;top:32px;width:1921px;height:1px;background:#d0d0d0;"></div>
<svg style="left:29px;top:12px" width="7" height="10" viewBox="0 0 7 10"><path d="M6.5 0L0.5 5L6.5 10Z" fill="#c2c2c2"/></svg>
<svg style="left:61px;top:12px" width="7" height="10" viewBox="0 0 7 10"><path d="M0.5 0L6.5 5L0.5 10Z" fill="#c2c2c2"/></svg>
<div style="left:112px;top:4px;width:1px;height:24px;background:#ababab;"></div>
<div class="tab" style="left:115px;top:3px;width:112px;height:26px;background:#203764;"></div>
<div class="tab" style="left:229px;top:0;width:105px;height:29px;background:#fff;border-left:1px solid #c6c6c6;border-right:1px solid #c6c6c6;border-bottom:2px solid #217346"></div>
<div style="left:232px;top:1px;width:99px;height:25px;background:linear-gradient(#fff 0%,#fff 22%,#e3e9e1 60%,#a9b9a5 100%)"></div>
<div class="tab" style="left:335px;top:3px;width:207px;height:26px;background:#1e6b70;"></div>
<div style="left:544px;top:4px;width:1px;height:24px;background:#ababab;"></div>
<div class="tab" style="left:547px;top:3px;width:199px;height:26px;background:#c00000;"></div>
<div style="left:748px;top:4px;width:1px;height:24px;background:#ababab;"></div>
</div>
<span id="t108" class="t" style="left:125.40px;top:901px;font-size:16.6px;color:#fff;transform:scaleX(1.0634);">Instructions</span>
<span id="t109" class="t" style="left:240.51px;top:901px;font-size:16.6px;color:#217346;font-weight:700;transform:scaleX(0.9831);">Scorecard</span>
<span id="t110" class="t" style="left:349.04px;top:901px;font-size:16.6px;color:#fff;transform:scaleX(1.0409);">Improvement_Priorities</span>
<span id="t111" class="t" style="left:560.69px;top:901px;font-size:16.6px;color:#fff;transform:scaleX(0.9664);">Pro_Tips_and_Mistakes</span>
<svg style="left:786px;top:912px" width="22" height="22" viewBox="0 0 22 22"><circle cx="11" cy="11" r="9.6" fill="none" stroke="#767676" stroke-width="1.2"/><path d="M6 11H16M11 6V16" stroke="#6a6a6a" stroke-width="1.8"/></svg>
<div style="left:1150px;top:916px;width:3px;height:3px;background:#b0b0b0;"></div>
<div style="left:1150px;top:921px;width:3px;height:3px;background:#b0b0b0;"></div>
<div style="left:1150px;top:926px;width:3px;height:3px;background:#b0b0b0;"></div>
<div style="left:1170px;top:913px;width:19px;height:19px;background:#fff;border:1px solid #9a9a9a"></div>
<svg style="left:1176px;top:918px" width="6" height="10" viewBox="0 0 6 10"><path d="M5.5 0L0.5 5L5.5 10Z" fill="#222"/></svg>
<div style="left:1189px;top:913px;width:684px;height:19px;background:#f3f3f3;"></div>
<div style="left:1189px;top:913px;width:608px;height:19px;background:#fff;border:1px solid #9a9a9a"></div>
<div style="left:1873px;top:913px;width:19px;height:19px;background:#fff;border:1px solid #9a9a9a"></div>
<svg style="left:1881px;top:918px" width="6" height="10" viewBox="0 0 6 10"><path d="M0.5 0L5.5 5L0.5 10Z" fill="#222"/></svg>
<div id="status" style="left:0;top:939px;width:1921px;height:27px;background:#f3f3f3">
<div style="left:0px;top:26px;width:1921px;height:1px;background:#909090;"></div>
<div style="left:1547px;top:0px;width:50px;height:26px;background:#c6c6c6;"></div>
</div>
<span id="t112" class="t" style="left:13.42px;top:933px;font-size:13px;color:#3b3b3b;transform:scaleX(0.9753);">Ready</span>
<span id="t113" class="t" style="left:138.26px;top:933px;font-size:13px;color:#2b2b2b;font-weight:700;transform:scaleX(0.9777);">Accessibility: Investigate</span>
<span id="t114" class="t" style="left:1429.51px;top:933px;font-size:13px;color:#2b2b2b;transform:scaleX(0.9918);">Display Settings</span>
<span id="t115" class="t" style="left:1877.02px;top:933px;font-size:12.6px;color:#444;transform:scaleX(0.9821);">100%</span>
<svg id="sicons" style="left:0;top:938px" width="1921" height="28" viewBox="0 938 1921 28">
<g fill="none" stroke="#666"><rect x="78.5" y="945.5" width="13" height="13" fill="#fdfdfd"/><rect x="85" y="945.5" width="6.5" height="3" fill="#666"/><path d="M81 950.5h2M84.3 950.5h1.7M87.3 950.5h1.9M81 953.5h2M84.3 953.5h1.7M87.3 953.5h1.9M81 956.5h2M84.3 956.5h1.7M87.3 956.5h1.9" stroke-width="1.1"/><circle cx="80.3" cy="947.4" r="3.3" fill="#666" stroke="none"/></g>
<g fill="none" stroke="#666" stroke-width="1.1"><path d="M121.8 945.3A7.2 7.2 0 0 0 122.8 959.6" stroke-dasharray="2.9 1.5" stroke-width="1.3"/><path d="M123.5 944V952.4M121.2 950.2L123.5 952.6L125.8 950.2M127 950.5H131.6M129.6 948.2L131.9 950.5L129.6 952.8" stroke="#555"/><path d="M125.6 953.6L134.6 961.6" stroke="#444" stroke-width="2"/><path d="M134.4 953.9L125.6 961.4" stroke="#444" stroke-width="1.4"/></g>
<g><rect x="1409" y="943" width="19" height="13" rx="1.6" fill="#505050"/><path d="M1413.6 959.3H1417.7V961H1412.9Z" fill="#505050"/><circle cx="1422.5" cy="956.3" r="6.1" fill="#f3f3f3"/><g transform="translate(1422.5 956.3)" fill="#505050"><circle r="3.9"/><rect x="-1.45" y="-5.3" width="2.9" height="3" rx="0.5" transform="rotate(0)"/><rect x="-1.45" y="-5.3" width="2.9" height="3" rx="0.5" transform="rotate(60)"/><rect x="-1.45" y="-5.3" width="2.9" height="3" rx="0.5" transform="rotate(120)"/><rect x="-1.45" y="-5.3" width="2.9" height="3" rx="0.5" transform="rotate(180)"/><rect x="-1.45" y="-5.3" width="2.9" height="3" rx="0.5" transform="rotate(240)"/><rect x="-1.45" y="-5.3" width="2.9" height="3" rx="0.5" transform="rotate(300)"/><circle r="1.9" fill="#fff"/></g></g>
<g fill="none" stroke="#666" stroke-width="1"><path d="M1564.5 944.5H1579.5V959.5H1564.5ZM1569.5 944.5V959.5M1574.5 944.5V959.5M1564.5 949.5H1579.5M1564.5 954.5H1579.5"/><rect x="1613.5" y="944.5" width="16" height="14"/><rect x="1617.5" y="946.5" width="8" height="10"/><path d="M1619.3 949.5H1624M1619.3 951.5H1624M1619.3 953.5H1624"/><path d="M1663.5 944.5H1679.5V959.5H1663.5ZM1663.5 953.5H1673.5M1668.5 944.5V953.5M1673.5 944.5V953.5"/></g>
</svg>
<div style="left:1704px;top:951px;width:10px;height:1px;background:#444;"></div>
<div style="left:1720px;top:952px;width:125px;height:1px;background:#555;"></div>
<div style="left:1780px;top:945px;width:6px;height:14px;background:#444;"></div>
<div style="left:1851px;top:951px;width:10px;height:1px;background:#444;"></div>
<div style="left:1855.5px;top:947px;width:1px;height:10px;background:#444;"></div>
<div style="left:1919px;top:0px;width:1px;height:966px;background:#f5f5f5;"></div>
<div style="left:1920px;top:0px;width:1px;height:966px;background:#000;"></div>
</body></html>
